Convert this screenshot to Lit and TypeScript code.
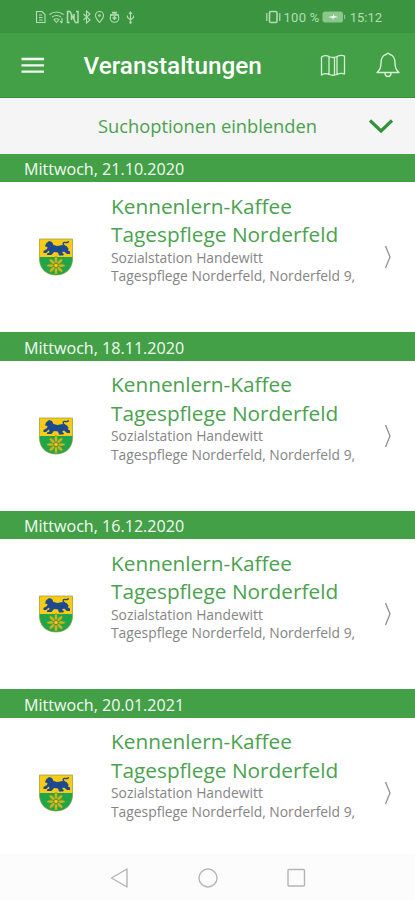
import { LitElement, html, svg, css } from "lit";
import { customElement, property } from "lit/decorators.js";

@customElement("event-entry")
class EventEntry extends LitElement {
  @property() date = "";

  static styles = css`
    :host { display: flex; flex-direction: column; height: 178.5px; flex: none; }
    .date {
      box-sizing: border-box; height: 28.5px; flex: none; padding: 1.5px 0 0 24px;
      background: #43a047; color: #f4fbf4; font-size: 16.1px; line-height: 28px;
      white-space: nowrap;
    }
    .row {
      flex: 1; display: grid; grid-template-columns: 111px 1fr 54px;
      align-items: center; background: #fff;
    }
    .crest { justify-self: center; width: 34px; height: 38px; }
    .text { align-self: start; padding-top: 9.5px; white-space: nowrap; }
    .title { font-size: 20.8px; line-height: 28.5px; color: #4aa24e; }
    .sub { font-size: 13.85px; line-height: 18.5px; color: #858585; }
    .arrow { justify-self: center; width: 12px; height: 28px; }
  `;

  render() {
    const petals = Array.from({ length: 8 }, (_, i) => svg`
      <ellipse cx="17" cy="22.2" rx="1.6" ry="3.8" transform="rotate(${i * 45} 17 27.5)"
        fill="#b5c02a" stroke="#6f8c20" stroke-width=".6"></ellipse>`);
    return html`
      <div class="date">${this.date}</div>
      <div class="row">
        <svg class="crest" viewBox="0 0 34 38">
          <path d="M.5 1h33v18H.5z" fill="#f9cb14"></path>
          <path d="M.5 19h33v2c0 9-6 16-16.5 16S.5 30 .5 21z" fill="#1fa64a"></path>
          <path d="M.5 1h33v20c0 9-6 16-16.5 16S.5 30 .5 21z" fill="none" stroke="#8f9b35" stroke-width=".7"></path>
          <path d="M7 5.500l3-2.500 3 1 1.500 3 4 1 5-1 4 1 2 2.500-.5 2 2 1v2.500h-3l-3-2.500-2 1 2 2-1 1h-4l-1-3-4-.5-2.500 3H8v-1.500l2.500-1-.5-2-3 2.500H4.500V13L8 11l.5-2L6 8.500z" fill="#1d4a8f"></path>
          <path d="M26 8c-3-2-2-4 0-3.500 2 .5 3-.5 4-1" fill="none" stroke="#1d4a8f" stroke-width="1.300"></path>
          ${petals}
          <circle cx="17" cy="27.500" r="2.300" fill="#e5ca25" stroke="#75701c" stroke-width=".8"></circle>
        </svg>
        <div class="text">
          <div class="title">Kennenlern-Kaffee</div>
          <div class="title">Tagespflege Norderfeld</div>
          <div class="sub">Sozialstation Handewitt</div>
          <div class="sub">Tagespflege Norderfeld, Norderfeld 9,</div>
        </div>
        <svg class="arrow" viewBox="0 0 12 28">
          <path d="M3.500 3l4.500 11-4.500 11" fill="none" stroke="#909090" stroke-width="1.300"></path>
        </svg>
      </div>`;
  }
}

@customElement("app-root")
class AppRoot extends LitElement {
  static styles = css`
    :host {
      display: flex; flex-direction: column; width: 415px; height: 900px; overflow: hidden;
      background: #fff; font-family: "Open Sans", "Noto Sans", sans-serif;
    }
    .status {
      box-sizing: border-box; height: 33px; flex: none; display: flex; align-items: center;
      justify-content: space-between; padding: 1px 33px 0 35px; background: #3b943f;
      color: #b5dcb6; font: 13px Roboto, sans-serif;
    }
    .left { width: 102px; height: 16px; }
    .right { display: flex; align-items: center; }
    .vibrate { width: 17px; height: 14px; margin-right: 1px; }
    .battery { width: 24px; height: 12px; margin: 0 4px 0 2px; }
    .percent { letter-spacing: .3px; }
    .bar {
      box-sizing: border-box; height: 64.5px; flex: none; display: flex; align-items: center;
      padding: 0 14px 0 21px; background: #43a047; border-bottom: 1px solid #388e3c;
    }
    .menu { width: 24px; height: 20px; }
    .bar h1 {
      flex: 1; margin: 3px 0 0 38.5px; color: #fff; font: 500 24.3px/30px Roboto, sans-serif;
    }
    .map { width: 26px; height: 24px; margin-right: 29px; }
    .bell { width: 26px; height: 28px; }
    .search {
      height: 56px; flex: none; display: grid; grid-template-columns: 1fr auto 1fr;
      align-items: center; background: #f5f5f5; color: #4aa24e; font-size: 18.3px;
    }
    .search span { grid-column: 2; white-space: nowrap; }
    .search svg { width: 26px; height: 16px; justify-self: end; margin-right: 21px; }
    .list { flex: 1; min-height: 0; overflow: hidden; display: flex; flex-direction: column; }
    nav {
      height: 46px; flex: none; display: flex; align-items: center; justify-content: center;
      gap: 64px; background: #fcfcfc;
    }
    nav svg { width: 24px; height: 24px; margin-top: 2px; }
  `;

  render() {
    const dates = ["21.10.2020", "18.11.2020", "16.12.2020", "20.01.2021"];
    return html`
      <div class="status">
        <svg class="left" viewBox="0 0 102 16" fill="none" stroke="#b5dcb6" stroke-width="1.100">
          <path d="M1.500 2.500h5.500l3 3v8h-8.500zM4 6h3M4 8.500h3.500M4 11h3.500"></path>
          <path d="M14.500 5.500q7-5 14 0M17 8q4.500-3 9 0M19 10.500q2.500-1.500 5 0l-2.500 3z"></path>
          <path d="M27 9v5M25 12l2 2"></path>
          <path d="M34.500 13.500h-2v-11h2.500l4 8V5M41 2.500h2v11h-2.500l-4-8V11" stroke-width="1.500"></path>
          <path d="M48.500 5l6.500 6-3.500 3V2L55 5l-6.500 6"></path>
          <path d="M64.500 13.500q-4-4.500-4-7a4 4 0 018 0q0 2.500-4 7z"></path><circle cx="64.500" cy="6.500" r=".8"></circle>
          <circle cx="79.500" cy="9" r="4.300"></circle><path d="M75 6h9M77 3.500h5M77.500 9h4M79.500 7v4" stroke-width="1.500"></path>
          <path d="M95.500 14V3M94 5l1.500-2L97 5M92.500 6.500v2l3 2.500 3-2.500v-2"></path><circle cx="95.500" cy="13.500" r=".7"></circle>
        </svg>
        <div class="right">
          <svg class="vibrate" viewBox="0 0 17 14" fill="none" stroke="#b5dcb6" stroke-width="1.200">
            <rect x="4.500" y="1.500" width="7.500" height="11" rx="1.500" stroke-width="1.600"></rect><path d="M1.800 3v8M14.800 3v8"></path>
          </svg>
          <span class="percent">100 %</span>
          <svg class="battery" viewBox="0 0 24 12">
            <rect x=".5" y=".5" width="20.500" height="11" rx="2.500" fill="#8bc68d"></rect>
            <path d="M22 4h1.200v4H22z" fill="#8bc68d"></path><path d="M6 6l5-1V3l1.500 2L16 6l-4.500 1v2L10 7z" fill="#effaf0"></path>
          </svg>
          <span>15:12</span>
        </div>
      </div>
      <header class="bar">
        <svg class="menu" viewBox="0 0 24 20"><path d="M.5 4h22.500M.5 10.300h22.500M.5 16.600h22.500" stroke="#f3fbf3" stroke-width="2.300"></path></svg>
        <h1>Veranstaltungen</h1>
        <svg class="map" viewBox="0 0 26 24" fill="none" stroke="#d8f0d8" stroke-width="1.300" stroke-linejoin="round">
          <path d="M1.500 4q4-2.500 7.500-.5 4 2 8 0 4-2 7.500-.5v18q-3.500-1.500-7.500.5-4 1.500-8 0-3.500-2-7.500.500zM9 3.500v18M17 3.500v18M14.500 4.500v17"></path>
        </svg>
        <svg class="bell" viewBox="0 0 26 28" fill="none" stroke="#d8f0d8" stroke-width="1.400" stroke-linejoin="round">
          <path d="M2 21.500q4-3 4-9.500c0-5 2.500-8 5-8.500q2-2.500 4 0c2.500.5 5 3.500 5 8.500q0 6.500 4 9.500zM10 21.800q0 3.700 3 3.700t3-3.700"></path>
        </svg>
      </header>
      <div class="search">
        <span>Suchoptionen einblenden</span>
        <svg viewBox="0 0 26 16"><path d="M2 2.500l11 10.500L24 2.500" fill="none" stroke="#359239" stroke-width="3.200"></path></svg>
      </div>
      <main class="list">${dates.map((d) => html`<event-entry .date=${"Mittwoch, " + d}></event-entry>`)}</main>
      <nav>
        <svg viewBox="0 0 24 24" fill="none" stroke="#b4b4b4" stroke-width="1.400" stroke-linejoin="round"><path d="M19 3v18L3.500 12z"></path></svg>
        <svg viewBox="0 0 24 24" fill="none" stroke="#b4b4b4" stroke-width="1.400"><circle cx="12" cy="12" r="9"></circle></svg>
        <svg viewBox="0 0 24 24" fill="none" stroke="#b4b4b4" stroke-width="1.400"><rect x="4" y="3.500" width="16.500" height="16.500" rx="1"></rect></svg>
      </nav>`;
  }
}
